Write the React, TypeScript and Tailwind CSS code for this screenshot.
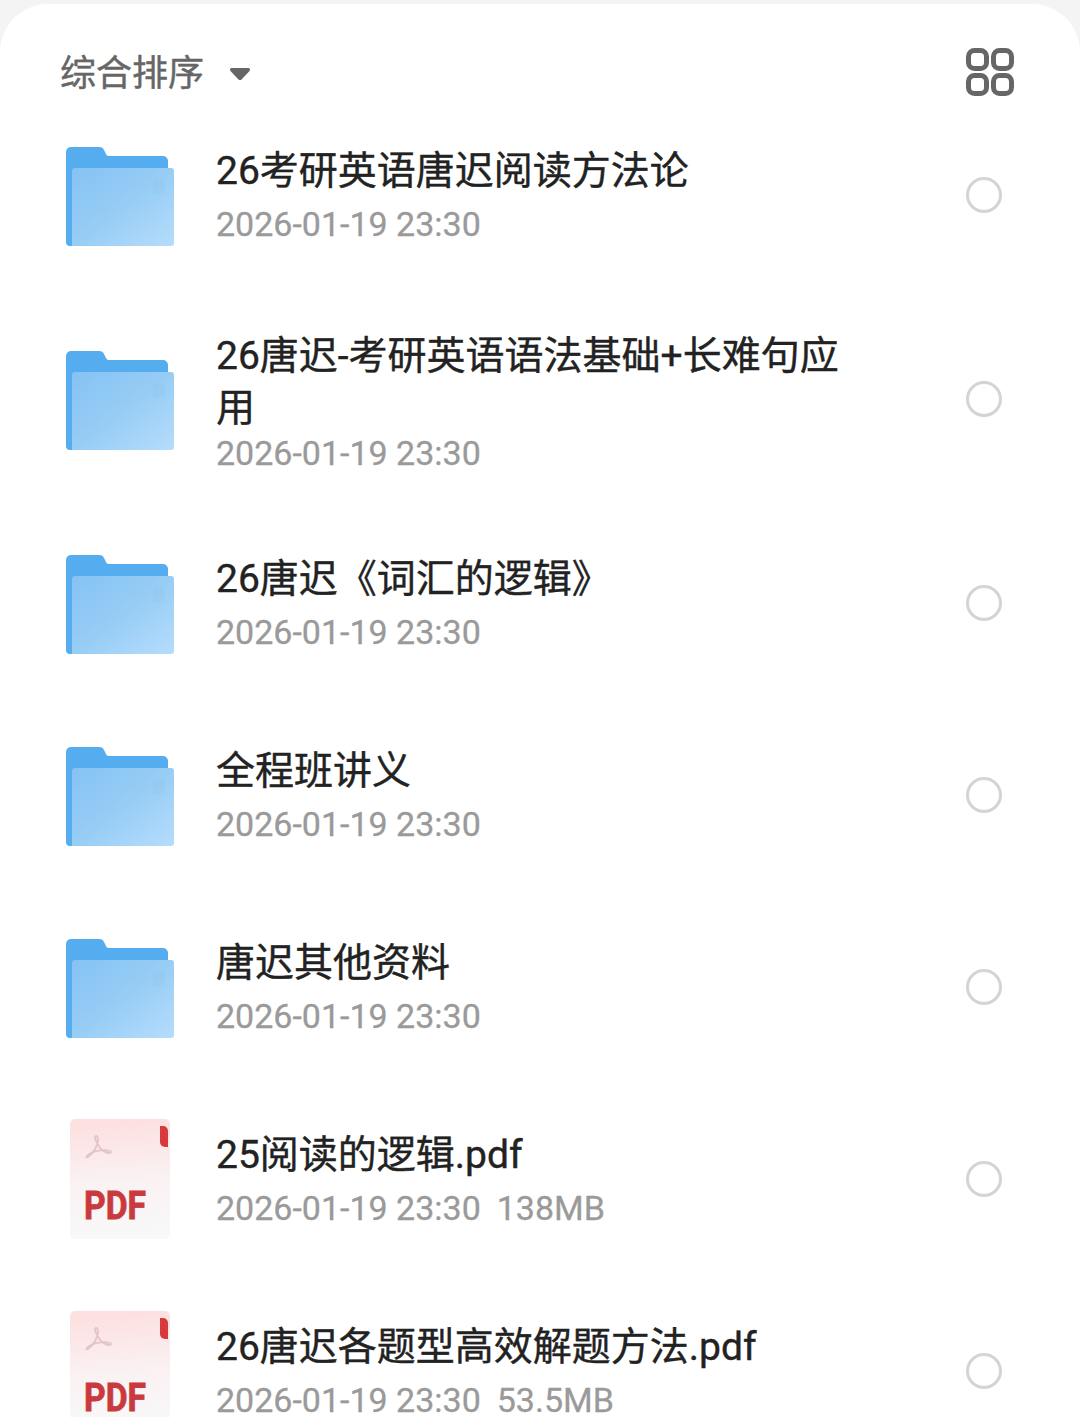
import React from 'react';

const FONT = 'font-["Roboto","Noto_Sans_CJK_SC",sans-serif]';

type Row = {
  name: string;
  kind: 'folder' | 'pdf';
  size?: string;
  rowClass: string;
  bodyClass?: string;
  dateClass: string;
};

const ROWS: Row[] = [
  { name: '26考研英语唐迟阅读方法论', kind: 'folder', rowClass: 'h-[192px]', dateClass: 'mt-[5px]' },
  {
    name: '26唐迟-考研英语语法基础+长难句应用',
    kind: 'folder',
    rowClass: 'h-[216px]',
    bodyClass: 'pt-[6px]',
    dateClass: '-mt-[3px]',
  },
  { name: '26唐迟《词汇的逻辑》', kind: 'folder', rowClass: 'h-[192px]', dateClass: 'mt-[5px]' },
  { name: '全程班讲义', kind: 'folder', rowClass: 'h-[192px]', dateClass: 'mt-[5px]' },
  { name: '唐迟其他资料', kind: 'folder', rowClass: 'h-[192px]', dateClass: 'mt-[5px]' },
  { name: '25阅读的逻辑.pdf', kind: 'pdf', size: '138MB', rowClass: 'h-[192px]', dateClass: 'mt-[5px]' },
  { name: '26唐迟各题型高效解题方法.pdf', kind: 'pdf', size: '53.5MB', rowClass: 'h-[192px]', dateClass: 'mt-[5px]' },
];

const FolderIcon = ({ id }: { id: number }) => (
  <svg width="108" height="99" viewBox="0 0 108 99" className="mt-[3px]">
    <defs>
      <linearGradient id={`folder-${id}`} x1="0" y1="0" x2="1" y2="1">
        <stop offset="0" stopColor="#85c2f4" />
        <stop offset="0.5" stopColor="#97cdf5" />
        <stop offset="1" stopColor="#b6dcfb" />
      </linearGradient>
    </defs>
    <path
      d="M0 5a5 5 0 0 1 5-5h28c3 0 4 1 5 3l2 4c1 2 2 2 4 2h53a5 5 0 0 1 5 5v10H6v75H4a4 4 0 0 1-4-4z"
      fill="#55adef"
    />
    <path d="M6 24a3 3 0 0 1 3-3h96a3 3 0 0 1 3 3v72a3 3 0 0 1-3 3H6z" fill={`url(#folder-${id})`} />
    <rect x="87" y="33" width="12" height="14" rx="2" fill="#7dbbec" opacity="0.15" />
  </svg>
);

const PdfIcon = ({ id }: { id: number }) => (
  <svg width="108" height="120" viewBox="0 0 108 120" className="-mt-[1px]">
    <defs>
      <linearGradient id={`pdf-${id}`} x1="0.45" y1="0" x2="0.5" y2="1">
        <stop offset="0" stopColor="#fddfdf" />
        <stop offset="0.5" stopColor="#faf1f2" />
        <stop offset="1" stopColor="#f8f9fa" />
      </linearGradient>
    </defs>
    <rect x="4" y="0" width="100" height="120" rx="5" fill={`url(#pdf-${id})`} />
    <path d="M94 7h3a5 5 0 0 1 5 5v16h-3a5 5 0 0 1-5-5z" fill="#d9383c" />
    <path
      d="M30 17c2 0 2 2 2 5-1 6-5 12-10 16-2 1-2 0-1-1 5-5 15-7 23-5 2 1 1 2-2 2-6-1-11-8-13-15 0-1 0-2 1-2z"
      fill="none"
      stroke="#e3c4c9"
      strokeWidth="1.800"
    />
    <text
      x="18"
      y="100"
      textLength="62"
      lengthAdjust="spacingAndGlyphs"
      fontFamily="Roboto, sans-serif"
      fontWeight="700"
      fontSize="39"
      fill="#c9393d"
      stroke="#c9393d"
      strokeWidth="0.8"
    >
      PDF
    </text>
  </svg>
);

const GridIcon = () => (
  <svg width="48" height="48" viewBox="0 0 48 48" fill="none" stroke="#666666" strokeWidth="5">
    <rect x="2.5" y="2.5" width="18" height="18" rx="6" />
    <rect x="27.5" y="2.5" width="18" height="18" rx="6" />
    <rect x="2.5" y="27.5" width="18" height="18" rx="6" />
    <rect x="27.5" y="27.5" width="18" height="18" rx="6" />
  </svg>
);

export default function App() {
  return (
    <div className={`h-[1417px] overflow-hidden bg-[#f4f4f4] pt-[4px] ${FONT}`}>
      <div className="h-full rounded-t-[48px] bg-white">
        <div className="flex h-[95px] items-start justify-between pl-[60px] pr-[66px] pt-[44px]">
          <div className="flex items-center">
            <span className="pt-[2px] text-[36px] leading-[48px] text-[#666666] [-webkit-text-stroke:0.4px_#666666]">
              综合排序
            </span>
            <svg width="20" height="12" viewBox="0 0 20 12" className="ml-[26px] mt-[2px]">
              <path d="M2 0h16c2 0 2.500 1.500 1.500 3l-7 7.500c-1.500 2-3.500 2-5 0L.5 3C-.5 1.500 0 0 2 0z" fill="#666666" />
            </svg>
          </div>
          <GridIcon />
        </div>

        {ROWS.map((row, index) => (
          <div key={index} className={`flex items-center pl-[66px] pr-[78px] ${row.rowClass}`}>
            <div className="flex w-[108px] shrink-0 justify-center">
              {row.kind === 'folder' ? <FolderIcon id={index} /> : <PdfIcon id={index} />}
            </div>
            <div className={`ml-[42px] min-w-0 flex-1 pr-[109px] ${row.bodyClass ?? ''}`}>
              <p className="pt-[1px] text-[39px] leading-[52px] text-[#222222] [-webkit-text-stroke:0.4px_#222222]">
                {row.name}
              </p>
              <p
                className={`whitespace-nowrap text-[34px] leading-[44px] text-[#9a9a9a] [-webkit-text-stroke:0.3px_#9a9a9a] ${row.dateClass}`}
              >
                2026-01-19 23:30
                {row.size && <span className="ml-[16px]">{row.size}</span>}
              </p>
            </div>
            <div className="size-[36px] shrink-0 rounded-full border-[3px] border-[#d4d4d4]" />
          </div>
        ))}
      </div>
    </div>
  );
}
